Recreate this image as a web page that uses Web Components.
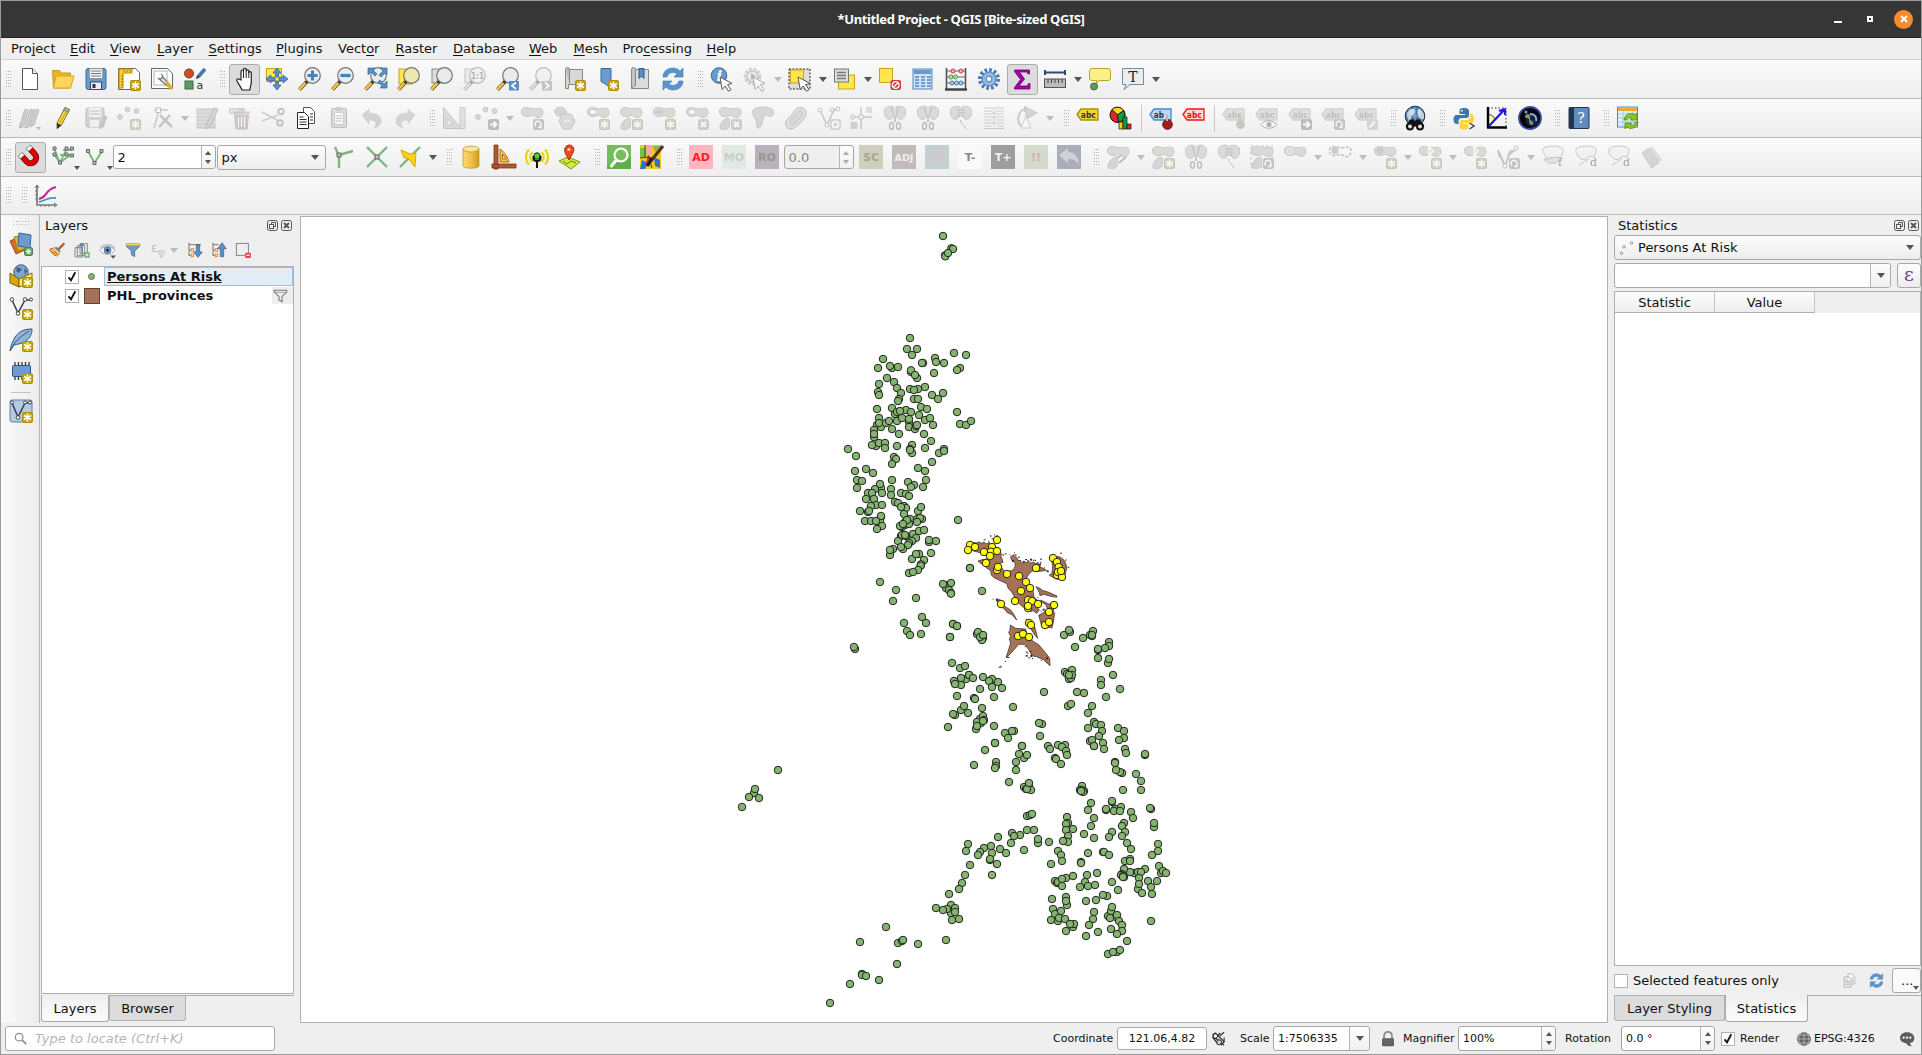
<!DOCTYPE html>
<html lang="en">
<head>
<meta charset="utf-8">
<title>*Untitled Project - QGIS [Bite-sized QGIS]</title>
<style>
html,body{margin:0;height:100%;overflow:hidden;background:#efefef}
body{font:13px "DejaVu Sans",sans-serif;color:#111}
</style>
</head>
<body>
<qgis-window></qgis-window>
<script>
/* ---------- icon parts, all on a 24 x 24 grid ---------- */
const star='<path d="M18.5 14.5v8M15 16.5l7 4M22 16.5l-7 4" stroke="#fff" stroke-width="1.5"/>';
const bNew='<rect x="13.5" y="13.5" width="10" height="10" rx="1.5" fill="#c8a31a" stroke="#b38f00"/>'+star;
const bBox=(c,inner)=>`<rect x="13.5" y="13.5" width="10" height="10" rx="1.5" fill="${c}" stroke="${c}"/>${inner}`;
const bX=bBox('#c98f8f','<path d="M16 16l5 5M21 16l-5 5" stroke="#fff" stroke-width="2"/>');
const bRight=bBox('#777','<path d="M15 18.5h6M18.5 15.5l3 3-3 3" stroke="#fff" stroke-width="1.8" fill="none"/>');
const bRot=bBox('#888','<path d="M16 20.500a3 3 0 1 1 4 0M18 21.500h3v-3" stroke="#fff" stroke-width="1.4" fill="none"/>');
const blob='<path d="M1.500 5C2 1 7 1 11 2.500S21 0 22.500 4s-1 8-4.500 7.500S14 8.500 10 10 1 10 1.500 5z" fill="#b6b6a8" stroke="#8a8a80"/>';
const smallBlob='<path d="M10 12c-2 0-6 3-7.500 7s0 4.500 3 4.500 6-1 6-5 1-6-1.500-6.500z" fill="#a9b3a9" stroke="#8a8a80"/>';
const cursor='<path d="M10 10l12 6.500-4.500 1.200 3.500 5-2.500 1.500-3.300-5.200-3 3.500z" fill="#fff" stroke="#555" stroke-width="1"/>';
const lens=(c='#e9ecec')=>`<path d="M9.500 14l-8 8.500" stroke="#333" stroke-width="3.600"/><path d="M7.500 15.800l-6 6.600" stroke="#fcc43a" stroke-width="2.600"/><circle cx="14.500" cy="8.500" r="7.800" fill="${c}" stroke="#777" stroke-width="1.200"/>`;
const scissor='<path d="M8 1l5 15M16 1l-5 15" stroke="#888" stroke-width="1.300"/><ellipse cx="8.500" cy="20" rx="2" ry="3.200" fill="none" stroke="#777" stroke-width="1.400"/><ellipse cx="15.500" cy="20" rx="2" ry="3.200" fill="none" stroke="#777" stroke-width="1.400"/>';
const split='<path d="M11 1v8c-1 3-3 5-6 4s-4-6-3.500-9S8-1 11 1zM13 1v8c1 3 3 5 6 4s4-6 3.500-9S16-1 13 1z" fill="#b5bbb0" stroke="#8a8a80"/>';
const tag=(f,s,t,tc='#333')=>`<path d="M1 8.500l4-5.500h17v11H5z" fill="${f}" stroke="${s}" stroke-width="1.300"/><text x="4.800" y="11.700" font-size="8" font-weight="bold" textLength="15" lengthAdjust="spacingAndGlyphs" fill="${tc}">${t}</text>`;
const gtag=tag('#c9c4b0','#a9a28a','abc','#777');
const dots='<circle cx="10.500" cy="3.500" r="2.400"/><circle cx="3" cy="11" r="2.400"/><circle cx="19.500" cy="5" r="2.400"/>';
const vnode='<path d="M3 4l7 15 7-15 5-1" fill="none" stroke="#888" stroke-width="1.500"/><g fill="#fff" stroke="#777"><circle cx="3" cy="4" r="2"/><circle cx="10" cy="19" r="2"/><circle cx="15" cy="4" r="2"/><circle cx="21" cy="3" r="2"/></g>';
const page='<path d="M4.500 1.500h10l5 5v16h-15z" fill="#fff" stroke="#555"/><path d="M14.500 1.500v5h5" fill="#eee" stroke="#555"/>';
const map4='<path d="M3.500 2.500h17v15h-14v4h-3z" fill="#d8d8d8" stroke="#888"/><path d="M3.500 2.500a2 2 0 0 1 4 0v14" fill="#bbb" stroke="#888"/>';
const sq=(bg,t,tc)=>`<rect width="24" height="24" fill="${bg}"/><text x="12" y="16" font-size="${t.length>2?9.5:11}" font-weight="bold" text-anchor="middle" fill="${tc}">${t}</text>`;
const blueRef='<g fill="#5a93cf" stroke="#3c78b5" stroke-width=".6"><path d="M2 10C2 4 7 1 12 1c3 0 5 1 7 3l3-3v9h-9l3-3c-4-3-9-1-10 3z"/><path d="M22 14c0 6-5 9-10 9-3 0-5-1-7-3l-3 3v-9h9l-3 3c4 3 9 1 10-3z"/></g>';
const fn='<path d="M2 3.500h20v3l-7.500 7V22l-5-3v-5.500L2 6.500z"';
const I={
new:page,
open:'<path d="M1.500 3.500h7l2 2.500h9v15h-17z" fill="#eab320" stroke="#c89a20"/><path d="M5 9h18l-3.500 12H2.500z" fill="#fdd55a" stroke="#d9a521"/>',
save:'<rect x="2" y="1.500" width="20" height="21" rx="2" fill="#6699cc" stroke="#3d6e9f"/><rect x="5.500" y="1.500" width="13" height="10" fill="#f4f4f4" stroke="#888" stroke-width=".7"/><path d="M7 4h10M7 6.500h10M7 9h10" stroke="#777"/><rect x="6.500" y="15" width="11" height="7.500" fill="#eee" stroke="#446"/><rect x="8.500" y="17" width="3" height="4" fill="#333"/>',
layout:'<path d="M1.500 1.500h17l4 4v17h-21z" fill="#fff" stroke="#666"/><path d="M2 2h13v4H6v15H2z" fill="#fdd02e" stroke="#b58a00"/><path d="M4 9h2M4 12h2M4 15h2M4 18h2M7 3v2M10 3v2M13 3v2" stroke="#a07800"/>'+bNew,
layoutmgr:'<path d="M1.500 1.500h16l5 5v15h-21z" fill="#fff" stroke="#666"/><rect x="4" y="4" width="13" height="14" fill="none" stroke="#9bc"/><path d="M11 7c2 1 2 3 1 4s-3 1-4 0l9 8 2-2-7-8" fill="#ddd" stroke="#777" stroke-width="1.200"/><path d="M16 15l6 7" stroke="#dcb02e" stroke-width="3.500"/>',
style:'<circle cx="6" cy="6.500" r="4.500" fill="#c94f26" stroke="#8e3517"/><path d="M22 2l-7 8" stroke="#3f78b5" stroke-width="3.500"/><path d="M15.500 9l-2 2.500" stroke="#333" stroke-width="2"/><rect x="2" y="14" width="8" height="8" fill="#5a9a62" stroke="#3a6d42"/><text x="13.500" y="22" font-size="11" fill="#333">a</text>',
hand:'<path d="M9 13V4.500c0-2 2.500-2 2.500 0V2.800c0-2 2.700-2 2.700 0v1.500c0-2 2.600-2 2.600 0V6c0-1.800 2.500-1.800 2.500 0v9c0 3-1 4-1.500 8H10c-1-3-3-5-5-9-1-2 1-3 2.500-1.500z" fill="#fff" stroke="#222" stroke-width="1.200"/><path d="M11.500 4v7M14.200 4v7M16.800 5v6" stroke="#222"/>',
panSel:'<rect x="1.500" y="1.500" width="15" height="13" fill="#ffe64d" stroke="#c8a31a"/><g fill="#5a8fc8" stroke="#35659a" stroke-width=".8"><path d="M12 1l4 5h-2.500v4h-3V6H8zM12 23l4-5h-2.500v-4h-3v4H8zM1 12l5-4v2.500h4v3H6V16zM23 12l-5-4v2.500h-4v3h4V16z"/></g>',
zin:lens()+'<path d="M14.500 3.500v10M9.500 8.500h10" stroke="#4b7fb8" stroke-width="3"/>',
zout:lens()+'<path d="M9.500 8.500h10" stroke="#4b7fb8" stroke-width="3.200"/>',
zfull:lens()+'<g fill="#5a8fc8" stroke="#35659a" stroke-width=".7"><path d="M4 1h7L9 3l4 4-2 2-4-4-3 3zM23 1v7l-2-2-4 4-2-2 4-4-3-3zM23 21h-7l2-2-4-4 2-2 4 4 3-3z"/></g>',
zsel:'<rect x="2" y="2" width="13" height="15" fill="#ffe64d" stroke="#c8a31a"/>'+lens('#efe9b0'),
zlay:'<rect x="2" y="2" width="12" height="14" fill="#ddd" stroke="#888"/>'+lens(),
z11:'<rect x="2" y="2" width="12" height="14" fill="#ddd" stroke="#888"/>'+lens()+'<text x="14.500" y="12" font-size="8.500" font-weight="bold" text-anchor="middle" textLength="13" lengthAdjust="spacingAndGlyphs" fill="#555">1:1</text>',
zlast:lens()+'<rect x="13" y="14" width="10" height="9.500" fill="#5a8fc8"/><path d="M20 15.500l-4 3.200 4 3.200" fill="none" stroke="#fff" stroke-width="1.800"/>',
znext:lens()+'<rect x="13" y="14" width="10" height="9.500" fill="#888"/><path d="M16 15.500l4 3.200-4 3.200" fill="none" stroke="#fff" stroke-width="1.800"/>',
nmap:map4+bNew,
nbook:'<path d="M6 1.500h10v20l-5-4-5-3z" fill="#6c9bd0" stroke="#3b6a9c"/>'+bNew,
books:'<path d="M3.500 2.500h17v19h-17z" fill="#dcdcdc" stroke="#888"/><path d="M3.500 2.500a2 2 0 0 1 4 0v16q-2 0-4 3z" fill="#c4c4c4" stroke="#888"/><path d="M11 1.500h5v10l-2.500-2.500-2.500 2.500z" fill="#5a8fc8" stroke="#2c5788"/>',
refresh:blueRef,
ident:'<circle cx="9" cy="8.500" r="7.800" fill="#6699cc" stroke="#3b6a9c"/><text x="6.500" y="14" font-size="15" font-style="italic" font-weight="bold" fill="#fff" font-family="DejaVu Serif,serif">i</text>'+cursor,
act:'<circle cx="9.500" cy="9.500" r="7.500" fill="none" stroke="#999" stroke-width="2.500" stroke-dasharray="3 1.500"/><circle cx="9.500" cy="9.500" r="5.500" fill="#ddd" stroke="#888" stroke-width="1.500"/><path d="M8 6v7l5-3.500z" fill="#666"/>'+cursor,
select:'<rect x="1" y="2" width="21" height="20" fill="#ddd" stroke="#222" stroke-dasharray="2 1.500"/><rect x="2.500" y="3" width="13" height="13" fill="#ffe64d" stroke="#c8a31a"/>'+cursor,
selval:'<rect x="5.500" y="8" width="16" height="14" fill="#ffe64d" stroke="#c8a31a"/><rect x="1.500" y="2" width="14" height="13" fill="#ddd" stroke="#777"/><path d="M4 5.500h9M4 8.500h9M4 11.500h9" stroke="#777" stroke-width="1.300"/>',
desel:'<rect x="1.500" y="1.500" width="13" height="14" fill="#ffe64d" stroke="#c8a31a"/><rect x="12.500" y="13" width="10.500" height="10" rx="2" fill="#d33b3b"/><circle cx="17.700" cy="18" r="3.300" fill="none" stroke="#fff" stroke-width="1.300"/><path d="M15.500 20.300l4.500-4.500" stroke="#fff" stroke-width="1.300"/>',
table:'<rect x="2" y="2" width="19" height="20" fill="#cfe2f5" stroke="#5588bb"/><rect x="3" y="3" width="17" height="4" fill="#6699cc"/><path d="M4 10h4M10 10h4M16 10h4M4 13h4M10 13h4M16 13h4M4 16h4M10 16h4M16 16h4M4 19h4M10 19h4M16 19h4" stroke="#5588bb" stroke-width="1.300"/>',
abacus:'<path d="M2.500 1v21M21.500 1v21" stroke="#555" stroke-width="1.600"/><path d="M1 22.500h22" stroke="#444" stroke-width="2.500"/><path d="M3 4h18M3 10h18M3 16h18" stroke="#666"/><g stroke-width="1"><g fill="#ffb0b0" stroke="#c33"><circle cx="9" cy="4" r="2"/><circle cx="17" cy="4" r="2"/></g><g fill="#b6e0b0" stroke="#494"><circle cx="7" cy="10" r="2"/><circle cx="11.500" cy="10" r="2"/></g><g fill="#b0cdf0" stroke="#37a"><circle cx="8" cy="16" r="2"/><circle cx="12.500" cy="16" r="2"/><circle cx="17" cy="16" r="2"/></g></g>',
gear:'<circle cx="12" cy="12" r="9" fill="none" stroke="#4a7db5" stroke-width="4" stroke-dasharray="2.700 2"/><circle cx="12" cy="12" r="7" fill="#8fb8e4" stroke="#4a7db5"/><circle cx="12" cy="12" r="2.800" fill="#f6f6f6" stroke="#4a7db5"/>',
sigma:'<path d="M4.500 3h15v4h-1.500c-.5-2-1.500-2-3-2H9.500l5 7-5.500 7H15c2 0 3-.5 3.500-2.500H20V22H4.500v-1.500L10.500 12.500 4.500 4.500z" fill="#a500a5" stroke="#730073" stroke-width=".8"/>',
measure:'<path d="M1.500 5.500h21M2 3v5M22 3v5" stroke="#2c4a72" stroke-width="2"/><rect x="1.500" y="12" width="21" height="8.500" fill="#bbb" stroke="#555"/><path d="M5 12v4M8.500 12v4M12 12v4M15.500 12v4M19 12v4" stroke="#444"/>',
tips:'<path d="M4 1.500h16a2.500 2.500 0 0 1 2.500 2.500v7a2.500 2.500 0 0 1-2.500 2.500h-9L7.500 18 9 13.500H4A2.500 2.500 0 0 1 1.500 11V4A2.500 2.500 0 0 1 4 1.500z" fill="#fdf08a" stroke="#bfa227"/><circle cx="6" cy="19.500" r="3.500" fill="#5f9a58" stroke="#3c6b37"/>',
anno:'<path d="M1.500 1.500h21v16H9l-6 5 2-5H1.500z" fill="#e8eff2" stroke="#7a8b92"/><text x="12" y="14.500" font-size="14" text-anchor="middle" font-family="DejaVu Serif,serif" fill="#222">T</text>',
pencils:'<path d="M1.500 20L7 3l3.500 1-5.500 17-3.500 1z M7 20l5.500-17 3.500 1-5.500 17-3.500 1z M12.500 18l5-15 3.500 1-5 15-3.500 2z" fill="#999" stroke="#777"/><path d="M18 21h5l-2.500 3z" fill="#666"/>',
pencil:'<path d="M6 17L14 1.500l4.500 2.300L10.500 19 6 22.500z" fill="#f3d745" stroke="#8a7619"/><path d="M6 17l4.500 2.200L6 23z" fill="#333"/><path d="M14 1.500l4.500 2.300-1.300 2.500-4.500-2.300z" fill="#bbb" stroke="#777"/><path d="M8.500 17l8-13" stroke="#b89b1b"/>',
saveEd:'<rect x="2" y="2" width="18" height="19" rx="2" fill="#aaa" stroke="#777"/><rect x="5" y="2" width="12" height="9" fill="#eee"/><path d="M6 5h10M6 8h10" stroke="#777"/><rect x="6" y="14" width="9" height="7" fill="#eee"/><path d="M15 22l6-12 2 1-5 11z" fill="#999" stroke="#777"/>',
addpt:'<g fill="#a9b3a9" stroke="#888">'+dots+'</g>'+bNew,
vertex:'<path d="M4 22L9 4h9M4 4h4" stroke="#888" fill="none" stroke-width="1.300"/><rect x="6" y="2" width="4.500" height="4.500" fill="#fff" stroke="#777"/><path d="M10 9l12 12M20 9L9 21" stroke="#888" stroke-width="2.500"/>',
multi:'<path d="M2 3h18v5H2zM2 10h18v5H2zM2 17h18v5H2z" fill="#b9b9a0" stroke="#888"/><path d="M11 20L19 2l4 1-8 18-4 2z" fill="#aaa" stroke="#777"/>',
trash:'<path d="M1.500 2.500h14v5h-14z" fill="#ccc" stroke="#999"/><path d="M5 6.500h17M10 3.500h7" stroke="#b88" stroke-width="2"/><path d="M6.500 9h14l-1.500 14h-11z" fill="#b58f8f" stroke="#977"/><path d="M10.500 11v10M13.500 11v10M16.500 11v10" stroke="#fff"/>',
cut:'<path d="M1 6l15 8M1 15l16-6" stroke="#999" stroke-width="1.800"/><circle cx="20" cy="5.500" r="2.700" fill="none" stroke="#a77" stroke-width="2"/><circle cx="19" cy="17" r="2.700" fill="none" stroke="#a77" stroke-width="2"/>',
copy:'<path d="M9.500 1.500h7l4 4v12h-11z" fill="#fff" stroke="#555"/><path d="M3.500 6.500h7l4 4v12h-11z" fill="#fff" stroke="#222"/><path d="M5.500 11h4M5.500 13.500h7M5.500 16h7M5.500 18.500h7M16 8h3M16 11h3M16 14h3" stroke="#333"/>',
paste:'<rect x="4.500" y="2.500" width="15" height="19" rx="1" fill="#bbb" stroke="#777"/><path d="M7.500 6.500h9v12h-9z" fill="#fff" stroke="#999"/><rect x="9" y="1" width="6" height="4" fill="#999"/><path d="M9 10h6M9 12.500h6M9 15h6" stroke="#888"/>',
undo:'<path d="M3 9l7-6v4c8 0 12 3 12 8 0 4-3 6-7 7 3-4 3-8-5-8v4z" fill="#b0a59a" transform="translate(-1 0)" stroke="#999" stroke-width=".6"/>',
redo:'<path d="M21 9l-7-6v4C6 7 2 10 2 15c0 4 3 6 7 7-3-4-3-8 5-8v4z" fill="#a0b0a0" transform="translate(1 0)" stroke="#999" stroke-width=".6"/>',
cad:'<path d="M1.500 1.500v21H19zM5 12v7h6z" fill="#bbb" stroke="#888" fill-rule="evenodd"/><path d="M18 1.500h5v21h-5z" fill="#ccc6b0" stroke="#999"/>',
move:'<g fill="#a9b3a9" stroke="#888">'+dots+'</g>'+bRight,
rot:blob+bRot, simp:'<path d="M2 4c2-4 9-4 11 1s-2 7-5 6-8-3-6-7z" fill="#aab" stroke="#889"/><path d="M9 8h9l4 7-4 8h-8l-4-8z" fill="#b5bbb8" stroke="#889"/><path d="M11 15h6" stroke="#fff"/>',
ring:blob+'<ellipse cx="7" cy="6" rx="4" ry="2.500" fill="#fff" stroke="#888"/>'+bNew,
part:blob+smallBlob+bNew, fring:blob+'<ellipse cx="7" cy="6" rx="3.500" ry="2" fill="#899"/>'+bNew,
dring:blob+'<ellipse cx="7" cy="6" rx="4" ry="2.500" fill="#fff" stroke="#888"/>'+bX, dpart:blob+smallBlob+bX,
reshape:'<path d="M2 4c3-4 18-4 20 0s0 7-4 6-5-1-6 4-3 9-5 8-1-8-3-10-3-6-2-8z" fill="#a9b3a9" stroke="#888"/>',
offset:'<path d="M5 12C8 9 11 2 15 1.500s8 2 7 7-7 10-11 13-9 1-9.500-3S3 14 5 12z" fill="#c7c4ad" stroke="#777"/><path d="M7 14c3-3 6-9 9-9s3 3 1 6-6 7-8 8-4-3-2-5z" fill="#aab5ab" stroke="#888"/>',
vnodes:vnode+bBox('#aaa','<circle cx="18.500" cy="18.500" r="3" fill="none" stroke="#fff" stroke-width="1.800"/>'),
trim:'<path d="M0 11h22M11 1v22" stroke="#888" stroke-width="1.400"/><path d="M9 9h4v4H9zM1 9h3v4H1z" fill="#fff" stroke="#888"/><rect x="16" y="1" width="6" height="6" fill="#c4bfa5"/><rect x="0.500" y="16" width="7" height="7" fill="#c99"/>',
splitF:split+scissor, splitP:split+scissor,
merge:split+'<path d="M8 4h8M8 7h8M8 10h8M12 14c-2 3 3 4 5 9" stroke="#777" fill="none"/>',
mattr:'<path d="M2 2h20M2 5h7l3 3 3-3h7M2 8h8M14 8h8M2 11h20M2 14h8M14 14h8M2 17h20M2 20h7M15 20h7M2 22.500h20M12 3v17" stroke="#999" fill="none"/>',
rotsym:'<path d="M10 3C3 5 1 15 6 20M10 0v6" fill="none" stroke="#888" stroke-width="1.800"/><path d="M11 1l11 6-11 6z" fill="#aab" stroke="#888"/><path d="M6 22l5-12 5 12z" fill="#fff" stroke="#999"/>',
label:tag('#f3d52b','#a88e0c','abc'),
diagram:'<circle cx="8.500" cy="9" r="7.500" fill="#e3242b" stroke="#111"/><path d="M8.500 9L3 3.500A7.500 7.500 0 0 1 15 5z" fill="#f9d71c" stroke="#111"/><path d="M8.500 9l6-4.500a7.500 7.500 0 0 1-5 12z" fill="#159a3c" stroke="#111"/><path d="M10 23v-7h4v7z" fill="#f9c91c" stroke="#111" stroke-width=".7"/><path d="M14 23V11h4v12z" fill="#159a3c" stroke="#111" stroke-width=".7"/><path d="M18 23v-5h4v5z" fill="#e3242b" stroke="#111" stroke-width=".7"/>',
ltool:tag('#b9d7f7','#4a86c8','ab').replace('textLength="15"','textLength="10"')+'<circle cx="18.500" cy="18.500" r="4.800" fill="#9d1f1f" stroke="#6c1010"/><path d="M18 8v7" stroke="#bbb" stroke-width="2"/>',
lred:tag('#ffd9d9','#ff1111','abc','#e01010'),
lpin:gtag+'<circle cx="18.500" cy="18.500" r="4.500" fill="#a88"/><path d="M18 9v7" stroke="#888" stroke-width="2"/>',
leye:gtag+'<path d="M6 18.500c4-5 11-5 16 0-5 5-12 5-16 0z" fill="#fff" stroke="#555"/><circle cx="14" cy="18.500" r="2.500" fill="#555"/>',
lmove:gtag+bRight,lrot:gtag+bRot,ledit:gtag+bBox('#b5b09a','<path d="M15.500 21.500l5.500-6" stroke="#fff" stroke-width="2"/>'),
meta:'<circle cx="12" cy="10" r="9.800" fill="#4d7ba8" stroke="#16314e"/><path d="M4 7c4-6 9-5 8-1s-5 3-4 7-4 1-4-6zM15 3c4 0 6 4 6 8s-5 2-6-2 0-4 0-6z" fill="#cdddea"/><path d="M3 10h18M12 1v18M7 2c-3 6-2 12 0 16M17 2c3 6 2 12 0 16" fill="none" stroke="#a9c3da" stroke-width=".7"/><path d="M7 13.500h4l1 2 1-2h4l4.500 7H2.500z" fill="#111"/><circle cx="7" cy="20.500" r="3" fill="#ddd" stroke="#111" stroke-width="2"/><circle cx="17" cy="20.500" r="3" fill="#ddd" stroke="#111" stroke-width="2"/>',
python:'<path d="M12 2C8 2 7.500 3.500 7.500 5v3H13v1H5c-2.500 0-3.500 2-3.500 4.500S2.500 18 5 18h1.500v-3c0-2 1.500-3 3.500-3h4.500c1.500 0 2.500-1 2.500-2.500V5c0-2-1.500-3-5-3z" fill="#3b78a9"/><path d="M12 23.500c4 0 4.500-1.500 4.500-3v-2.500H11v-1h8c2.500 0 3-2 3-4.500S21 8 19 8h-1v3c0 2-1.500 3-3.500 3H10c-1.500 0-2.500 1-2.500 2.500v4c0 2 1 3 4.500 3z" fill="#ffd43f"/><circle cx="9.800" cy="4.800" r="1" fill="#fff"/><path d="M17.500 17l4.500 3-4.500 3" fill="none" stroke="#444" stroke-width="1.500"/>',
plot:'<path d="M3 2h18v18" fill="none" stroke="#333" stroke-dasharray="1.500 2"/><path d="M3 21V9c4-1 6 2 7 5z" fill="#fffb9c" stroke="#333"/><path d="M3 1v21M2 21.500h20" stroke="#000" stroke-width="2.400"/><path d="M4 20L20 3M20 3l-6 2M20 3v6" stroke="#1a1aee" stroke-width="2.200"/>',
globe:'<circle cx="12" cy="12" r="11" fill="#05060f" stroke="#3a4898" stroke-width="1.800"/><circle cx="14" cy="14" r="6.500" fill="#14224a"/><path d="M7 10c3-4 6-1 5 2s5 3 3 6-4-1-4-4-5-1-4-4z" fill="#7d9a62"/><path d="M12 8c4 0 7 2 6 7" stroke="#88b6dd" stroke-width="1.800" fill="none"/><circle cx="8" cy="6" r="1.500" fill="#99a"/>',
help:'<rect x="2" y="1.500" width="20" height="21" rx="1" fill="#5f8cc0" stroke="#22364e"/><rect x="2" y="1.500" width="5" height="21" fill="#22364e"/><text x="14" y="17" font-size="14" text-anchor="middle" fill="#fff" font-family="DejaVu Serif,serif">?</text>',
trefresh:'<rect x="1.500" y="1" width="20" height="20" fill="#dff0fb" stroke="#3a94c9"/><path d="M2 3.500h19" stroke="#f0a830" stroke-width="3"/><path d="M2 8h19M2 12h19M2 16h19M7 5v16M12 5v16M17 5v16" stroke="#8fc7e8" stroke-width=".8"/><path d="M8 14c0-6 8-8 11-5l2-2v7h-7l2-2c-3-1-5 0-5 2zM22 16c0 6-8 8-11 5l-2 2v-6h7l-2 2c3 1 5 0 5-3z" fill="#8cc71e" stroke="#4e8a10" stroke-width=".8"/>',
magnet:'<g transform="rotate(-42 12 12)"><path d="M6.500 3.500v9.500a5.500 5.500 0 0 0 11 0V3.500" stroke="#7d0000" stroke-width="6"/><path d="M6.500 4v9a5.500 5.500 0 0 0 11 0V4" stroke="#d80000" stroke-width="4.600"/><path d="M6.500 3v4M17.500 3v4" stroke="#999" stroke-width="6"/><path d="M6.500 3.800v2.600M17.500 3.800v2.600" stroke="#fff" stroke-width="4.600"/></g>',
snapall:'<path d="M3 3l6 15 7-15M9 10h12M3 9l6 9 6-5 6-3M12 5h9" stroke="#79b97d" stroke-width="1.800" fill="none"/><g fill="#bbb" stroke="#666"><path d="M2 2h3v3H2zM2 8h3v3H2zM7.500 16h3v3h-3zM14 2h3v3h-3zM14 8h3v3h-3zM19.500 2h3v3h-3zM19.500 9h3v3h-3z"/></g>',
snapv:'<path d="M4 6l6.500 12L18 6" stroke="#79b97d" stroke-width="2" fill="none"/><path d="M2.500 4.500h3v3h-3zM9 16.500h3v3H9zM16 4.500h3v3h-3z" fill="#bbb" stroke="#666"/>',
topo:'<path d="M3 2l4 9v12M7 10l14-4" stroke="#79b97d" stroke-width="2.400" fill="none"/><path d="M5 8h4v4H5z" fill="#bbb" stroke="#666"/>',
inter:'<path d="M2 2l20 20M22 2L2 22" stroke="#79b97d" stroke-width="2.400"/><path d="M10 10h4v4h-4z" fill="#bbb" stroke="#666"/>',
trace:'<path d="M2 22L22 2" stroke="#79b97d" stroke-width="2.400"/><path d="M3 5l9 4 6-1-1 14-7-9H6z" fill="#fcd116" stroke="#e0a800"/>',
cyl:'<linearGradient id="c"><stop stop-color="#f9d871"/><stop offset=".5" stop-color="#f1c24b"/><stop offset="1" stop-color="#d09a1c"/></linearGradient><path d="M4 4v17c0 3 16 3 16 0V4z" fill="url(#c)" stroke="#c28e1c" stroke-width=".7"/><ellipse cx="12" cy="4" rx="8" ry="3" fill="#fbe39a" stroke="#c28e1c" stroke-width=".7"/>',
square:'<path d="M2 0h4v24H2zM0 19h24v4H0z" fill="#b5562c" stroke="#7e3213" stroke-width=".8"/><path d="M8 15V4c3 2 7 6 9 13H8zM10.500 9v5h3.500z" fill="#f5c33c" stroke="#a5700f" fill-rule="evenodd"/>',
gps:'<path d="M7.500 7c-3 3-3 7 0 10M16.500 7c3 3 3 7 0 10M4 4.500c-4 4-4 11 0 15M20 4.500c4 4 4 11 0 15" fill="none" stroke="#e6d60c" stroke-width="2.200"/><circle cx="12" cy="11" r="3.200" fill="#3fdc2a" stroke="#222"/><path d="M8.500 11v2c0 4 7 4 7 0v-2M12 16v7" fill="none" stroke="#111" stroke-width="2"/>',
pin:'<path d="M1 16l9-4 12 5-9 7z" fill="#d7e83a" stroke="#6f9a1c"/><path d="M5 16l4 3 4-3 5 2" stroke="#4d8a1c" fill="none"/><path d="M11 15C7 8 6 6 7 3c2-4 7-4 8.500 0C17 6 14 9 11 15z" fill="#ee4a1c" stroke="#a82a08"/><circle cx="11" cy="4.500" r="1.500" fill="#ffd0c0"/>',
osm:'<rect width="24" height="24" fill="#5fae48"/><path d="M0 0h24v12L0 20z" fill="#8acb6d" opacity=".5"/><circle cx="14" cy="10" r="6.500" fill="#79bd5e" stroke="#fff" stroke-width="2.200"/><path d="M9.500 15l-6 7" stroke="#fff" stroke-width="3.200"/>',
art:'<rect width="21" height="24" fill="#f2cb1f"/><path d="M0 3h6v9H0zM13 1h7v6h-5z" fill="#7ac143"/><path d="M6 0h6v8l-5 4z" fill="#f5a3b5"/><path d="M2 15l6 3-3 6H0zM14 12l6 3v8l-5-2z" fill="#2f73c8"/><path d="M8 10l5 4-4 8-3-5z" fill="#d93a2a"/><path d="M0 13l9-1 3 11M5 0v12" fill="none" stroke="#333" stroke-width=".9"/><path d="M23 1L10 17" stroke="#5a2a12" stroke-width="3"/><path d="M12 13l-5 8" stroke="#222" stroke-width="3"/>',
AD:sq('#ffb6c1','AD','#ff1c1c'),MO:sq('#e2e9e2','MO','#c5d2c5'),RO:sq('#b9b2bc','RO','#9b978c'),SC:sq('#cfcfbd','SC','#a5a68f'),ADJ:sq('#c3bbbb','ADJ','#efefef'),P2:sq('#c6cfd0','2P','#d6c3c9'),
Tm:sq('#f9f9f9','T-','#888'),Tp:sq('#9e9e9e','T+','#f4f4f4'),ex:sq('#d4dacc','!!','#cfaeae'),
back:'<rect width="24" height="24" fill="#abaeba"/><path d="M2 10l9-7v4c7 0 11 6 11 13-3-5-6-6-11-6v4z" fill="#cfd2d8"/>',
f1:blob+smallBlob+'<path d="M11 13l5-3M13 18l7-6" stroke="#a66" stroke-width="2"/>',f2:blob+smallBlob+bNew,
f3:'<rect x="1" y="1" width="21" height="21" fill="none" stroke="#bba" stroke-width="2" stroke-dasharray="3 2"/>'+blob+smallBlob+bRot,
b1:blob+'<circle cx="7" cy="6" r="3" fill="#bbb" stroke="#fff" stroke-dasharray="1.500 1"/>',
b2:'<path d="M1.500 5C2 1 7 1 11 2.500S21 0 22.500 4s-1 8-4.500 7.500S14 8.500 10 10 1 10 1.500 5z" fill="none" stroke="#777" stroke-width="1.500" stroke-dasharray="3 1.500"/><circle cx="7" cy="5.500" r="3.500" fill="#899"/>',
b3:blob+'<circle cx="7" cy="5.500" r="3.500" fill="#899"/>'+bNew,b4:blob+'<path d="M11 1.500v9M11 2l4 4-4 5" stroke="#fff" fill="none" stroke-width="1.500"/>'+bNew,
vv:'<path d="M3 7l6 14 4-11 9-8M2 5l2 8M15 5l-3 6" stroke="#888" stroke-width="2" fill="none"/><circle cx="20" cy="3" r="2" fill="#fff" stroke="#888"/><circle cx="9" cy="21" r="2" fill="#fff" stroke="#888"/>'+bRot,
fj:'<path d="M2 4c3-4 17-4 20 0 1 4-2 6-2 9H5C5 10 1 8 2 4z" fill="#eee" stroke="#888"/><path d="M3 14c5 2 10-4 17-1-1 6-14 8-17 1z" fill="#ccc" stroke="#888"/><text x="17" y="21" font-size="11" fill="#333" font-family="DejaVu Serif,serif">f</text>',
dj:'<path d="M2 4c3-4 17-4 20 0 1 4-2 6-2 8-6-3-8 5-13 2C4 12 1 8 2 4zM5 20l10-6" fill="#eee" stroke="#888"/><text x="16" y="21" font-size="11" fill="#333" font-family="DejaVu Serif,serif">d</text>',
para:'<path d="M2 8l7-5 10 14-7 6z" fill="#aab0a8" stroke="#888"/><path d="M11 2l10 14" stroke="#bbb" stroke-width="3"/>',
profile:'<path d="M3 1v20h20" fill="none" stroke="#777" stroke-width="1.700"/><path d="M1 4l2-3 2 3M20 19l3 2-3 2M1 7h2M1 11h2M1 15h2M7 21v2M11 21v2M15 21v2" fill="none" stroke="#777"/><path d="M5 15c9-2 5-9 17-12" fill="none" stroke="#c2289b" stroke-width="2"/><path d="M5 18c6-1 8-5 17-4" fill="none" stroke="#3da0b8" stroke-width="1.800"/>',
dsm:'<path d="M1 9l9-4 6 13-9 4z" fill="#d56a2c" stroke="#a04a18"/><path d="M5 5l10-2 4 13-10 3z" fill="#e8b022" stroke="#a87d10"/><path d="M10 1l12 2-1 13-12-2z" fill="#6c9bd0" stroke="#35659a"/><rect x="15.500" y="15.500" width="8" height="8" rx="1.500" fill="#6aa86a" stroke="#4c864c"/><path d="M19.500 17v5M17 19.500h5" stroke="#fff" stroke-width="1.700"/>',
geopkg:'<circle cx="12" cy="8" r="7.200" fill="#7fa6cf" stroke="#35587f"/><path d="M8 3l5 2-3 4-3-2zM15 4l3 3-2 4z" fill="#3c618c"/><path d="M1 9l9 6v8l-9-4z" fill="#d8a80c" stroke="#7f6200"/><path d="M10 15l13-6v9l-13 5z" fill="#fdf07a" stroke="#7f6200"/>'+bNew,
vlayer:'<path d="M3 4l6 13 7-13h6" fill="none" stroke="#333f4d" stroke-width="1.500"/><g fill="#fff" stroke="#444"><circle cx="3" cy="3.500" r="1.800"/><circle cx="9" cy="17.500" r="1.800"/><circle cx="16" cy="3.500" r="1.800"/><circle cx="22" cy="3.500" r="1.500"/></g>'+bNew,
feather:'<path d="M1 23c1-6 4-15 10-19 4-2.500 8-3 12-3 0 5-2 9-6 12s-9 3-12 4z" fill="#8fb4de" stroke="#35587f"/><path d="M1 23C5 14 12 8 20 3" fill="none" stroke="#35587f"/>'+bNew,
mem:'<path d="M6 2v4M9.500 2v4M13 2v4M16.500 2v4M20 2v4M6 16v4M9.500 16v4M13 16v4" stroke="#333" stroke-width="1.300"/><rect x="3.500" y="5.500" width="18" height="11" rx="1" fill="#6c9bd0" stroke="#2e5580"/>'+bNew,
vvirt:'<rect x="1" y="1" width="22" height="22" rx="2" fill="#b4c9e2" stroke="#5c7fa8"/><path d="M3 4l6 14 7-14h6" fill="none" stroke="#333f4d" stroke-width="1.500"/><g fill="#fff" stroke="#444"><circle cx="3" cy="3.500" r="1.500"/><circle cx="9" cy="18.500" r="1.800"/><circle cx="16" cy="3.500" r="1.500"/><circle cx="21" cy="3.500" r="1.500"/></g>'+bNew,
brush:'<path d="M23 2l-9 9" stroke="#b5622c" stroke-width="3.500"/><path d="M3 10l8-2 6 6-4 7c-4 1-8-3-12-8z" fill="#f2cf5a" stroke="#c97b2c"/><path d="M3 13l8 8M1 11l4-1M7 13l6 6" stroke="#d24" stroke-width="1.500"/><path d="M10 8l6 6" stroke="#4f7fb5" stroke-width="2.500"/>',
addgrp:'<path d="M9 2.500h11v15H9zM5 5.500h11v15H5zM1.500 8.500h11v14h-11z" fill="none" stroke="#777" stroke-width="1.300"/><path d="M12 17V3M9 6l3-4 3 4" stroke="#3c6fa5" fill="none" stroke-width="1.500"/><rect x="15.500" y="15.500" width="8" height="8" rx="1.500" fill="#6aa86a"/><path d="M19.500 17v5M17 19.500h5" stroke="#fff" stroke-width="1.500"/>',
eye:'<path d="M1 12C6 5 17 5 23 12 17 19 6 19 1 12z" fill="#fff" stroke="#888"/><circle cx="12" cy="11.500" r="4.800" fill="#6c9bd0" stroke="#35587f"/><circle cx="12" cy="11.500" r="2" fill="#222"/><path d="M2 8C8 2 17 3 22 9" stroke="#aaa" fill="none" stroke-width="1.500"/><path d="M16 19h8l-4 4.500z" fill="#555"/>',
filter:fn+' fill="#6c9bd0" stroke="#35587f"/><path d="M2 2.500h20v3H2z" fill="#ffe64d" stroke="#b59b1a"/>',
filterO:fn+' fill="#eee" stroke="#777" stroke-width="1.700"/><path d="M3 7h18" stroke="#777"/>',
eps:'<text x="1" y="15" font-size="19" fill="#888">ε</text><path d="M12 13h10v3l-3 3v4h-4v-4l-3-3z" fill="#ccc" stroke="#999"/>',
expand:'<path d="M3 1v20M3 4h18M3 12h5M3 20h5" stroke="#777" stroke-width="1.500"/><path d="M6 10h4v4H6zM6 18h4v4H6z" fill="#fde3c0" stroke="#f08a1c" stroke-width="1.500"/><path d="M14 4h5v11h4l-6.500 8L10 15h4z" fill="#5a8fc8" stroke="#35587f"/>',
collapse:'<path d="M3 1v20M3 4h8M3 12h5M3 20h5" stroke="#777" stroke-width="1.500"/><path d="M6 10h4v4H6zM6 18h4v4H6z" fill="#fde3c0" stroke="#f08a1c" stroke-width="1.500"/><path d="M14 22h5V10h4l-6.500-9L10 10h4z" fill="#5a8fc8" stroke="#35587f"/>',
remove:'<rect x="2" y="2" width="18" height="18" fill="#eee" stroke="#777" stroke-width="1.300"/><rect x="15" y="16" width="9" height="8" rx="2" fill="#ef4550"/><path d="M17 20h5" stroke="#fff" stroke-width="1.700"/>',
search:'<circle cx="9.500" cy="9.500" r="7" fill="none" stroke="#8a8a8a" stroke-width="2.200"/><path d="M15 15l7.500 7.500" stroke="#8a8a8a" stroke-width="3"/>',
extent:'<path d="M3 6l4-3 14 14-4 5zM5 14l10-11M2 9l9 12" fill="#ddd" stroke="#222" stroke-width="1.800"/><path d="M14 8l7-6M11 14l10 9M21 10v8" stroke="#333" stroke-width="1.700" fill="none"/><circle cx="7" cy="8" r="3.500" fill="#fff" stroke="#222" stroke-width="1.500"/><circle cx="13" cy="18" r="4" fill="#ccc" stroke="#222" stroke-width="1.500"/>',
lock:'<path d="M6 12V8c0-9 12-9 12 0v4" fill="none" stroke="#8c8c86" stroke-width="2.600"/><rect x="3" y="11" width="18" height="12" rx="2" fill="#5e5e5e"/><path d="M4 15h16M4 19h16" stroke="#757575"/>',
crs:'<path d="M12 1l8 4 3 7-3 7-8 4-8-4-3-7 3-7z" fill="#666"/><path d="M1 12h22M12 1v22M3 6h18M3 18h18M8 2c-5 7-5 13 0 20M16 2c5 7 5 13 0 20" stroke="#ccc" fill="none" stroke-width="1"/>',
chat:'<path d="M12 2c14 0 14 16 4 16l3 5c-5 0-7-3-9-5C-2 17-1 2 12 2z" fill="#5c5c5c"/><g fill="#fff"><circle cx="7" cy="10" r="1.700"/><circle cx="12" cy="10" r="1.700"/><circle cx="17" cy="10" r="1.700"/></g>',
pts:'<g fill="#fff" stroke="#888" stroke-width="1.400"><circle cx="8" cy="11" r="1.900"/><circle cx="20" cy="5" r="1.900"/><circle cx="4" cy="21" r="1.900"/></g>'
};
const svg=(n,s=24)=>`<svg viewBox="0 0 24 24" width="${s}" height="${s}" fill="none" font-family="DejaVu Sans,sans-serif">${I[n]||''}</svg>`;

/* Defines an element whose shadow root is filled from its attributes */
const def=(tag,css,html)=>customElements.define(tag,class extends HTMLElement{
  connectedCallback(){ if(this.shadowRoot)return;
    const t=document.createElement('template');
    t.innerHTML=`<style>:host{display:block;box-sizing:border-box}*{box-sizing:border-box}svg{display:block;overflow:visible}${css}</style>${html(this)}`;
    this.attachShadow({mode:'open'}).append(t.content.cloneNode(true)); }
});
const A=(e,n)=>e.getAttribute(n)||'';

def('q-icon',':host{flex:none}:host([off]){opacity:.5;filter:grayscale(.75)}',e=>svg(A(e,'name'),A(e,'size')||24));
def('tool-row',':host{display:flex;align-items:center;height:39px;flex:none;background:linear-gradient(#fafafa,#eee);border-bottom:1px solid #b9b9b9;padding-left:0;overflow:hidden}:host([last]){height:38px}',()=>'<slot></slot>');

/* items: "|" handle, "," separator; suffix "~" disabled, "*" pressed, ">" drop-down, "." corner arrow */
def('tool-group',`:host{display:flex;align-items:center;height:100%;flex:none}
 .b{width:33px;height:31px;flex:none;display:flex;align-items:center;justify-content:center;position:relative}
 .p::before{content:"";position:absolute;inset:0 1px;border:1px solid #acacac;border-radius:3px;background:#dcdcdc}
 .b svg{position:relative}
 .off{opacity:.43;filter:grayscale(.75)}
 .c::after{content:"";position:absolute;right:0;bottom:3px;border:3px solid transparent;border-top:4px solid #555;border-bottom:0}
 .d{width:12px;display:flex;justify-content:center;flex:none}
 .d::before{content:"";border:4px solid transparent;border-top:5px solid #555;border-bottom:0}
 .d.off{opacity:.35}
 .h{width:16px;height:17px;flex:none;padding-left:8px}
 .h i{display:block;width:5px;height:17px;background:radial-gradient(circle at .5px .5px,#b4b4b4 .7px,transparent .8px) 0 0/2px 3px}
 :host([first]) .h:first-of-type{width:13.5px;padding-left:5.5px}
 .s{width:7px;padding-left:3px;height:27px;flex:none}.s i{display:block;width:1px;height:100%;background:#c9c9c9}`,
 e=>A(e,'items').trim().split(/\s+/).map(k=>{
  if(k==='|')return '<div class="h"><i></i></div>';
  if(k===',')return '<div class="s"><i></i></div>';
  const n=k.replace(/[~*>.]/g,''),off=k.includes('~');
  return `<div class="b ${k.includes('*')?'p':''} ${off&&!/^(MO|RO|SC|ADJ|P2|Tm|Tp|ex|back)$/.test(n)?'off':''} ${k.includes('.')?'c':''}">${svg(n)}</div>`+(k.includes('>')?`<div class="d ${off?'off':''}"></div>`:'');
 }).join(''));

def('q-spin',`:host{display:flex;flex:none;border:1px solid #a5a5a5;border-radius:3px;background:#fff;height:24px;align-items:center}
 :host([off]){background:#efefef;color:#888}
 span{flex:1;padding-left:4px;white-space:nowrap}
 div{width:14px;height:100%;border-left:1px solid #b5b5b5;display:flex;flex-direction:column;justify-content:center;align-items:center;gap:5px;background:linear-gradient(#fdfdfd,#f0f0f0);border-radius:0 3px 3px 0}
 i{border:3.5px solid transparent}.u{border-bottom:4px solid #555;border-top:0}.v{border-top:4px solid #555;border-bottom:0}
 :host([off]) i{opacity:.45}`,()=>'<span><slot></slot></span><div><i class="u"></i><i class="v"></i></div>');
def('q-combo',`:host{display:flex;border:1px solid #a9a9a9;border-radius:3px;background:linear-gradient(#fdfdfd,#ededed);align-items:center}
 :host([edit]){background:#fff}
 span{flex:1;padding-left:4px;display:flex;align-items:center;gap:4px;white-space:nowrap}
 div{width:20px;height:100%;display:flex;align-items:center;justify-content:center}
 :host([edit]) div{border-left:1px solid #b5b5b5;background:linear-gradient(#fdfdfd,#f0f0f0);border-radius:0 3px 3px 0}
 i{border:4px solid transparent;border-top:5px solid #555;border-bottom:0}`,()=>'<span><slot></slot></span><div><i></i></div>');
def('q-check',':host{width:14px;height:14px;border:1px solid #b2b2b2;background:#fff;flex:none}svg{width:12px;height:12px}',e=>e.hasAttribute('on')?'<svg viewBox="0 0 12 12" fill="none"><path d="M2.500 6.300l2.500 3 4.300-8" stroke="#111" stroke-width="1.800"/></svg>':'');
def('dock-title',`:host{display:flex;align-items:center;height:18px;padding-left:4px;gap:3px;flex:none}span{flex:1}
 svg{width:11px;height:11px}`,()=>`<span><slot></slot></span>
 <svg viewBox="0 0 11 11" fill="none" stroke="#555"><rect x=".5" y=".5" width="10" height="10" rx="2"/><rect x="2.500" y="4.500" width="4" height="4"/><path d="M4.500 4.500v-2h4v4h-2"/></svg>
 <svg viewBox="0 0 11 11" fill="none" stroke="#555"><rect x=".5" y=".5" width="10" height="10" rx="2"/><path d="M3 3l5 5M8 3l-5 5" stroke-width="1.800"/></svg>`);
def('dock-tabs',`:host{display:flex;align-items:flex-start;height:28px;border-top:1px solid #b0b0b0;flex:none}
 div{border:1px solid #b2b2b2;border-top:0;border-radius:0 0 3px 3px;height:25px;display:flex;align-items:center;justify-content:center;background:#dcdcdc}
 .on{background:linear-gradient(#efefef,#fbfbfb);height:27px;margin-top:-1px;border-color:#a9a9a9}`,
 e=>A(e,'tabs').split('|').map(t=>{const[l,w,o]=t.split(':');return `<div class="${o?'on':''}" style="width:${w}px">${l}</div>`}).join(''));
def('menu-bar',`:host{display:flex;height:22px;align-items:center;border-bottom:1px solid #d2d2d2;background:#efefef;padding-left:2px;flex:none}
 span{flex:none;padding-left:8px;white-space:nowrap}u{text-underline-offset:2px;text-decoration-thickness:1px}`,
 ()=>[['Pro_ject',59],['_Edit',40],['_View',47],['_Layer',51.5],['_Settings',67.5],['_Plugins',62],['Vect_or',57.5],['_Raster',57.5],['_Database',76],['_Web',44.5],['_Mesh',49],['Pro_cessing',84],['_Help',40]]
 .map(([t,w])=>`<span style="width:${w}px">${t.replace(/_(.)/,'<u>$1</u>')}</span>`).join(''));
def('title-bar',`:host{display:grid;grid-template-columns:1fr auto 1fr;height:37px;align-items:center;background:#363636;border-bottom:1px solid #222;color:#fff;flex:none;font:bold 13px "Noto Sans","Open Sans",sans-serif}
 .t{grid-column:2;letter-spacing:-.37px}.c{display:flex;justify-content:flex-end;align-items:center;gap:25px;padding-right:8px}
 .m{width:8px;height:2px;background:#fff;margin-top:6px}.x{width:6px;height:6px;border:2px solid #fff;margin-right:-4px}
 .k{width:19px;height:19px;border-radius:50%;background:#f68b2c;display:flex;align-items:center;justify-content:center}`,
 ()=>`<div class="t">*Untitled Project - QGIS [Bite-sized QGIS]</div><div class="c"><div class="m"></div><div class="x"></div><div class="k"><svg viewBox="0 0 8 8" width="8" height="8"><path d="M1 1l6 6M7 1L1 7" stroke="#fff" stroke-width="2"/></svg></div></div>`);

/* Point chunks: origin x, origin y, then x,y pairs in thirds of a pixel from it */
const pts=[
[820,220,'369,48 394,85 399,87 375,106 376,109 384,99 270,354 261,387 291,387 276,405 189,417 174,444 216,444 210,438 234,441 309,429 306,429 345,414 348,426 372,429 402,399 438,405 420,444 411,450 342,459 273,456 273,451 291,474 285,465 201,474 222,486 231,504 177,492 174,516 177,525 243,519 237,537 234,543 270,507 294,507 282,510 315,501 282,537 294,537 336,525 354,537 369,519 171,567 216,564 225,582 231,576 258,570 273,576 240,573 303,561 321,567 297,585 177,594 171,615 183,621 177,609 198,609 207,603 231,603 246,594 267,606 267,597 267,621 285,627 288,618 291,615 315,600 330,594 339,615 162,630 162,651 162,642 216,627 237,642 312,642 333,663 168,678 156,675 177,669 195,669 195,684 231,678 276,699 276,675 270,687 270,690 315,684 357,699 372,687 372,693 336,726 411,576 420,612 438,615 453,603 84,687 108,708 222,711 228,717 216,732 105,753 138,747 159,759 111,780 126,783 111,804 294,744 315,753 318,780 309,801 216,780 264,786 282,795 273,801 183,804 165,807 180,792 186,819 213,807 213,825 144,819 156,819 138,837 162,837 243,819 258,822 267,828 168,855 153,858 186,855 120,873 144,876 147,873 225,846 234,849 252,858 258,864 243,861 252,882 294,873 303,861 183,891 180,903 183,888 135,903 153,903 168,903 186,918 171,927 270,897 291,897 306,897 300,894 255,915 246,921 264,909 243,918 255,906 267,912 240,918 261,900 249,912 291,906 243,948 234,963 246,945 258,948 255,945 279,942 297,933 312,930 288,954 276,963 267,969 264,975 249,987 243,981 219,987 210,1005 210,990 327,966 327,960 348,963 333,999 297,1002 276,1017 288,1002 312,1020 303,1035 414,900 450,1044'],
[820,550,'303,43 302,47 294,60 267,69 279,66 180,96 228,120 219,153 288,144 384,105 393,99 378,114 387,120 393,129 369,102 393,131 252,219 261,243 270,255 303,252 306,201 318,219 399,222 411,228 390,261 105,297 102,291 396,339 420,354 435,348 402,393 438,387 447,375 423,384 423,405 405,402 411,438 423,480 432,468 405,495 399,492 444,489 384,531'],
[920,520,'150,144 186,213 99,312 111,318 90,351 171,342 174,336 189,354 186,360 180,351 189,345 147,465 159,474 189,471 216,477 207,483 234,486 216,501 246,504 180,507 162,534 165,537 222,531 186,564 279,561 372,516 180,597 189,588 192,600 168,627 183,609 171,606 189,603 171,618 222,618 255,639 282,633 276,633 264,654 225,669 306,678 366,612 357,609 360,648 432,345 450,336 447,330 489,354 510,345 519,333 516,348 516,345 465,381 567,366 567,378 555,384 534,390 534,387 534,414 564,429 567,417 435,456 456,450 447,477 453,474 441,462 456,465 447,465 579,465 543,480 543,495 600,507 558,531 471,516 492,519 444,558 453,552 516,558 504,579 522,606 528,612 543,615 504,624 546,633 537,648 510,663 516,660 522,678 549,669 594,624 612,633 612,654 597,660'],
[920,730,'195,60 225,39 306,48 162,105 228,96 228,108 225,114 312,84 297,72 321,75 288,96 288,120 267,156 312,171 327,165 318,177 333,180 321,177 327,159 384,48 390,57 414,45 435,45 426,51 438,63 441,75 405,84 408,87 423,102 552,57 522,48 615,57 618,69 675,75 675,72 585,96 585,99 606,129 600,126 588,120 648,132 663,153 663,180 609,180 486,168 480,180 492,183 489,186 483,180 483,183 513,219 504,240 522,264 513,288 492,312 522,324 576,216 576,213 558,240 558,237 585,237 603,231 582,243 600,243 633,246 639,264 693,237 690,234 612,279 606,288 615,306 606,318 621,339 633,357 576,306 567,321 702,291 702,279 321,258 330,255 336,252 441,261 444,279 438,282 459,297 438,300 444,318 432,333 444,336 429,333 387,336 321,300 342,300 354,339 354,327 276,309 300,315 282,318 234,321 273,339 312,360 240,357 258,369 192,354 213,348 180,366 174,375 216,369 210,390 210,387 231,402 216,435 144,342 138,363 150,405 135,435 126,459 117,477 87,492 414,363 423,375 426,393 393,402 504,369 549,366 552,366 567,375 483,396 483,399 714,342 714,363 696,375 615,393 630,387 630,393 717,408 723,429 729,423 738,429 531,429 501,435 495,456 480,471 504,468 525,465 576,456 594,480 459,438 438,444 405,453 411,459 414,456 426,447 426,468 675,417 642,429 630,426 654,426 663,426 612,417 606,432 603,435 612,441 609,438 609,441 657,444 654,477 657,462 684,453 693,471 711,453 666,489 696,492 498,513 528,510 561,498 549,495 396,507 438,501 441,525 438,513 399,537 405,552 423,543 393,570 414,573 417,564 435,567 459,591 462,582 450,582 438,603 522,546 519,567 507,585 498,618 534,606 564,558 573,543 576,531 588,561 591,555 570,564 597,573 606,585 606,603 573,597 591,612 621,633 693,573 564,672 591,666 579,666 600,660 48,534 93,525 105,534 93,549 81,537 69,540 105,546 96,570 117,567 78,630'],
[720,750,'174,60 102,129 105,117 87,141 117,144 66,171 498,531 420,576 534,579 546,573 549,570 594,582 531,642 426,672 426,675 438,678 477,690 390,702 330,759']];
const sel2=[920,520,'231,60 150,75 144,90 165,81 216,81 213,95 192,96 210,108 231,93 198,129 231,150 234,141 261,162 297,168 348,144 318,186 330,204 303,213 285,243 324,240 336,243 324,264 324,258 354,252 387,276 402,255 375,315 387,306 327,309 333,315 294,348 309,342 327,351 243,252 399,114 411,126 416,141 411,165 414,156 426,171 423,153'];
const circ=(a,cls)=>a[2].split(' ').map(p=>{const[x,y]=p.split(',');return `<circle class="${cls}" r="3.750" cx="${(a[0]+x/3).toFixed(2)}" cy="${(a[1]+y/3).toFixed(2)}"/>`}).join('');
/* loose islets along the coast */
const islets='211,45 215,55 222,43 228,46 205,62 191,58 248,102 254,100 268,103 276,120 282,97 294,110 286,102 315,117 322,120 330,116 345,120 360,116 361,125 357,132 372,142 380,151 300,120 420,98 436,118 442,140 218,236 228,238 314,378 317,395 320,405 325,412 322,399 331,405 336,414 316,406 333,402 328,393 362,420 378,412 255,423 236,440 241,437 262,411 362,272 368,266 352,232 338,119 310,123';
def('map-canvas',`:host{background:#fff;border:1px solid #b0b0b0;min-width:0;overflow:hidden}
 svg{overflow:hidden}
 .g{fill:#85b66f;stroke:#232323;stroke-width:1}.y{fill:#ff0;stroke:#232323;stroke-width:1}
 .l{fill:#a57158;stroke:#3a2e28;stroke-width:2.200;stroke-linejoin:round}.i{fill:#333}`,()=>`
 <svg width="1306" height="805" viewBox="301 217 1306 805">
 <g transform="translate(920 520) scale(.33333)" class="l">
  <path d="M150 70L160 67 168 69 176 66 185 70 192 66 198 72 208 67 212 78 226 84 236 92 244 100 243 110 247 118 249 128 243 127 240 132 244 142 252 152 256 160 264 154 275 152 284 144 286 132 282 124 274 120 272 110 281 104 284 110 290 112 294 121 300 122 305 128 311 124 320 128 325 122 332 129 341 126 347 131 354 127 356 134 361 131 360 142 368 144 379 151 366 153 352 155 340 152 332 156 325 165 317 178 320 186 330 195 338 205 340 218 342 232 352 240 357 252 352 262 358 270 350 280 340 272 330 275 318 266 305 258 295 248 290 242 282 228 275 216 264 204 261 192 250 186 238 181 222 173 214 165 212 152 200 144 192 136 182 130 174 123 190 118 206 117 195 104 180 98 158 92z"/>
  <path d="M348 200l14 6 2 4 20 6 27 12-1 4-18-3-20-6-12 4-2-10z"/>
  <path d="M362 240l24 12 16-2-2 24 4 6-4 26-4 18-20-4-12-6-4-14-4-14 14-8 12-12-4-12-14-8z"/>
  <path d="M392 106l14 4 12 0 12 8 8 14 2 14-6 22-12 10-12 0-22-12 8-8 2-20-4-18z"/>
  <path d="M228 236l14 4 14 20 16 10 10 14 8 16-14-16-14-6-12-14-10-4-8-16z"/>
  <path d="M318 298l12 6 14 16 9 35-10-12-14-22z"/>
  <path d="M271 315l16 10 30 2 4 18 14 16 22 14 20 24 12 16 1 22-20-18-18-8-16-4-8-16-14-18-18 0-12 14-22 24-4 2 14-44-4-12 4-8-6-12 4-6z"/>
 </g>
 <g class="i">${islets.split(' ').map((p,i)=>{const[x,y]=p.split(',');return `<rect x="${920+x/3}" y="${520+y/3}" width="${1+i%2}" height="${1+(i%3===0)}"/>`}).join('')}</g>
 ${pts.map(p=>circ(p,'g')).join('')}${circ(sel2,'y')}
 </svg>`);

def('side-bar',`:host{width:39px;border-right:1px solid #b4b4b4;background:linear-gradient(90deg,#fafafa,#ececec);display:flex;flex-direction:column;align-items:center;padding:6px 0 0 2px;gap:8px;flex:none}
 .h{width:17px;height:5px;background:radial-gradient(circle at .5px .5px,#b4b4b4 .7px,transparent .8px) 0 0/3px 3px;margin-bottom:-2px}.s{width:20px;height:1px;background:#c5c5c5;margin:0 0 -2px}`,
 ()=>'<div class="h"></div>'+['dsm','geopkg','vlayer','feather','mem'].map(n=>svg(n)).join('')+'<div class="s"></div>'+svg('vvirt'));

def('layers-panel',`:host{width:253px;margin-left:1px;display:flex;flex-direction:column;flex:none}
 dock-title{padding-right:2px;margin-top:1px}
 .t{display:flex;align-items:center;height:32px;padding-left:8px;flex:none}
 .t>*{margin-right:9px}.a{border:4px solid transparent;border-top:5px solid #bbb;border-bottom:0;margin:0 9px 0 -5px}
 .t .z{margin-right:8px}
 .tree{flex:1;border:1px solid #b0b0b0;background:#fff;display:flex;flex-direction:column;font-weight:bold;margin-bottom:1px}
 .r{display:flex;height:19px;align-items:center;padding-left:23px;flex:none}
 .y{width:25px;display:flex;justify-content:center}.n{flex:1;display:flex;align-items:center;padding-left:2px;height:19px;border:1px solid transparent;border-right:0}
 .on{background:linear-gradient(90deg,#e4eff8,#e3ecf3);border:1px solid #9fc0da}
 .d{width:7px;height:7px;border-radius:50%;background:#85b66f;border:1px solid #5a7a4c}
 .q{width:16px;height:16px;background:#a57158;border:1px solid #5f4436;flex:none}
 .f{width:21px;height:17px;background:#ededed;display:flex;padding-left:1px;align-items:center}`,()=>`<dock-title>Layers</dock-title>
 <div class="t"><q-icon name="brush" size="16"></q-icon><q-icon name="addgrp" size="16"></q-icon><q-icon name="eye" size="17"></q-icon><q-icon name="filter" size="16"></q-icon><q-icon name="eps" size="16" off></q-icon><div class="a"></div><q-icon class="z" name="expand" size="16"></q-icon><q-icon class="z" name="collapse" size="16"></q-icon><q-icon name="remove" size="16"></q-icon></div>
 <div class="tree"><div class="r"><q-check on></q-check><div class="y"><div class="d"></div></div><div class="n on"><u>Persons At Risk</u></div></div>
 <div class="r"><q-check on></q-check><div class="y"><div class="q"></div></div><div class="n">PHL_provinces</div><div class="f"><q-icon name="filterO" size="15"></q-icon></div></div></div>
 <dock-tabs tabs="Layers:68:1|Browser:77"></dock-tabs>`);

def('stats-panel',`:host{width:307px;display:flex;flex-direction:column;flex:none}
 dock-title{padding-right:2px;margin-top:1px}
 .c{height:25px;margin-top:1px;flex:none}.x{display:flex;gap:6px;margin-top:3px;height:25px;flex:none}.x q-combo{flex:none;width:277px}
 .e{width:24px;border:1px solid #a9a9a9;border-radius:3px;background:linear-gradient(#fdfdfd,#ededed);display:flex;align-items:center;justify-content:center;font:19px/1 "DejaVu Serif",serif;color:#6d3f80;padding-bottom:3px}
 .g{flex:1;border:1px solid #b0b0b0;background:#fff;margin-top:3px}
 .h{display:flex;height:21px;background:#efefef}.h div{width:100px;border-right:1px solid #c4c4c4;border-bottom:1px solid #b0b0b0;display:flex;align-items:center;justify-content:center;background:linear-gradient(#fdfdfd,#ededed)}
 .s{display:flex;height:29px;align-items:center;flex:none;gap:5px;padding-left:0}.s span{flex:1}.s .i1{margin-right:7px}.s .i2{margin-right:10px}
 .m{width:29px;height:25px;border:1px solid #a9a9a9;border-radius:3px;background:#fafafa;padding:4px 0 0 8px;position:relative;margin-left:-7px}
 .m i{position:absolute;right:1px;bottom:2px;border:3px solid transparent;border-top:4px solid #555;border-bottom:0}`,()=>`<dock-title>Statistics</dock-title>
 <q-combo class="c"><q-icon name="pts" size="15"></q-icon>Persons At Risk</q-combo>
 <div class="x"><q-combo edit></q-combo><div class="e">ε</div></div>
 <div class="g"><div class="h"><div>Statistic</div><div>Value</div></div></div>
 <div class="s"><q-check></q-check><span>Selected features only</span><q-icon class="i1" name="copy" size="15" off></q-icon><q-icon class="i2" name="refresh" size="15"></q-icon><div class="m">...<i></i></div></div>
 <dock-tabs tabs="Layer Styling:111|Statistics:83:1"></dock-tabs>`);

def('status-bar',`:host{display:flex;align-items:center;height:31px;flex:none;padding:0 6px 0 4px;font-size:11px}
 .l{width:270px;height:25px;border:1px solid #a9a9a9;border-radius:3px;background:#fff;display:flex;align-items:center;gap:8px;padding-left:8px;font:italic 13px "DejaVu Sans",sans-serif;color:#b5b5b5}
 .f{flex:1}span{white-space:nowrap;flex:none}
 .b{width:90px;height:23px;border:1px solid #a9a9a9;border-radius:3px;background:#fff;display:flex;align-items:center;justify-content:center;margin:-1px 4px 0 4px}
 q-combo,q-spin{height:25px;flex:none}`,()=>`<div class="l"><q-icon name="search" size="13"></q-icon>Type to locate (Ctrl+K)</div><div class="f"></div>
 <span style="width:60px">Coordinate</span><div class="b">121.06,4.82</div><q-icon name="extent" size="15"></q-icon>
 <span style="width:33px;margin-left:14px">Scale</span><q-combo edit style="width:97px">1:7506335</q-combo><q-icon name="lock" size="16" style="margin:0 7px 0 10px"></q-icon>
 <span style="width:55px">Magnifier</span><q-spin style="width:98px;">100%</q-spin>
 <span style="width:56px;margin-left:9px">Rotation</span><q-spin style="width:94px">0.0 °</q-spin>
 <q-check on style="margin:0 5px 0 6px"></q-check><span style="width:56px">Render</span><q-icon name="crs" size="16"></q-icon><span style="width:85px;margin-left:2px">EPSG:4326</span><q-icon name="chat" size="16"></q-icon>`);

def('qgis-window',`:host{display:flex;flex-direction:column;width:1922px;height:1055px;border:1px solid #989c9a;background:#efefef}
 .main{flex:1;display:flex;min-height:0}
 map-canvas{flex:1;margin:1px 6px 0 6px}
 .pad{margin-left:-1px}`,()=>`<title-bar></title-bar><menu-bar></menu-bar>
 <tool-row><tool-group class="pad" first items="| new open save layout layoutmgr style | hand* panSel zin zout zfull zsel zlay z11~ zlast znext~ nmap nbook books refresh | ident act~> select> selval> desel table abacus gear sigma* measure> tips anno>"></tool-group></tool-row>
 <tool-row><tool-group class="pad" first items="| pencils~ pencil saveEd~ addpt~ vertex~> multi~ trash~ cut~ copy paste~ undo~ redo~ | cad~ move~> rot~ simp~ ring~ part~ fring~ dring~ dpart~ reshape~ offset~ vnodes~ trim~ splitF~ splitP~ merge~ mattr~ rotsym~> | label diagram , ltool lred , lpin~ leye~ lmove~ lrot~ ledit~ | meta | python plot globe | help | trefresh"></tool-group></tool-row>
 <tool-row><tool-group class="pad" first items="| magnet* snapall. snapv."></tool-group><q-spin style="width:103px;margin-right:1px">2</q-spin><q-combo style="width:109px;height:25px;margin-right:2px;flex:none">px</q-combo><tool-group items="topo inter trace> | cyl square gps pin | osm art | AD MO~ RO~"></tool-group><q-spin off style="width:70px;margin-right:1px">0.0</q-spin><tool-group items="SC~ ADJ~ P2~ Tm~ Tp~ ex~ back~ | f1~> f2~ splitF~ merge~ f3~ b1~> b2~> b3~> b4~> b4~ vv~> fj~ dj~ dj~ para~"></tool-group></tool-row>
 <tool-row last><tool-group class="pad" first items="| | profile"></tool-group></tool-row>
 <div class="main"><side-bar></side-bar><layers-panel></layers-panel><map-canvas></map-canvas><stats-panel></stats-panel></div>
 <status-bar></status-bar>`);
</script>
</body>
</html>
